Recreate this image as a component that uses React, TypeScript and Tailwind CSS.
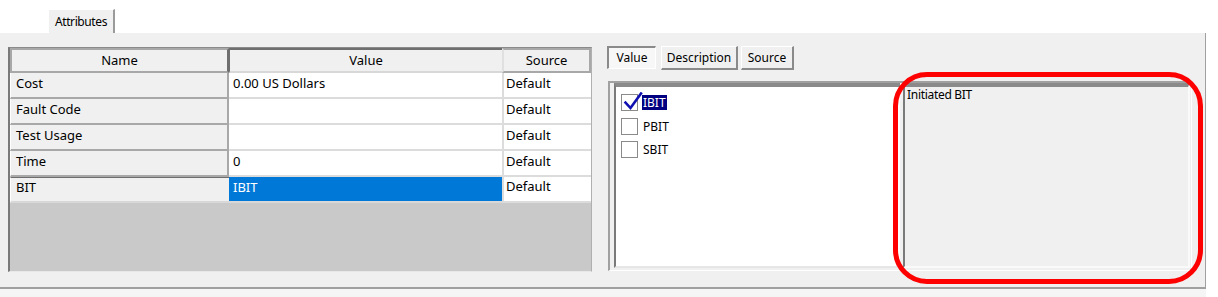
import React from "react";

const rows = [
  { name: "Cost", value: "0.00 US Dollars", source: "Default" },
  { name: "Fault Code", value: "", source: "Default" },
  { name: "Test Usage", value: "", source: "Default" },
  { name: "Time", value: "0", source: "Default" },
];

function Check() {
  return (
    <svg width="22" height="22" viewBox="0 0 22 22" className="absolute left-[1px] top-[-3px]">
      <path d="M2.5 10.5 L7.5 16 L18 1.5" fill="none" stroke="#1010b0" strokeWidth="2.6" strokeLinecap="square" strokeLinejoin="miter" />
    </svg>
  );
}

function Item({ label, checked, selected }: { label: string; checked?: boolean; selected?: boolean }) {
  return (
    <div className="flex items-center h-[23.5px]">
      <div className="relative w-[17px] h-[17px] border border-[#8a8a8a] bg-white flex-none">
        {checked && <Check />}
      </div>
      <div className="ml-[4px] flex items-center">
        <span
          className={
            selected
              ? "bg-[#000080] text-white text-[12px] leading-[15px] px-[1px]"
              : "text-black text-[12px] leading-[15px] px-[1px]"
          }
        >
          {label}
        </span>
      </div>
    </div>
  );
}

export default function App() {
  return (
    <div className="relative w-[1218px] h-[297px] bg-white font-['Noto_Sans',sans-serif] text-black overflow-hidden">
      {/* tab strip */}
      <div className="h-[33px] flex items-end pl-[48px]">
        <div className="w-[67px] h-[24px] bg-[#f0f0f0] border-l border-t border-white border-r-2 border-r-[#9a9a9a] flex items-center justify-center text-[12px] tracking-[-0.4px] text-black">
          Attributes
        </div>
      </div>

      {/* main panel */}
      <div className="w-[1206px] h-[254px] bg-[#f0f0f0] border-r border-r-[#a0a0a0] flex">
        {/* property grid */}
        <div className="ml-[8px] mt-[14px] w-[584px] h-[225px] border-l-2 border-t border-l-[#7a7a7a] border-t-[#8a8a8a] border-r border-b border-r-[#b0b0b0] border-b-[#e8e8e8] bg-[#c9c9c9] flex flex-col">
          {/* header */}
          <div className="flex h-[25px] flex-none bg-[#f0f0f0]">
            <div className="w-[219px] border-2 border-[#a8a8a8] border-r-[#6e6e6e] flex items-center justify-center text-[13px]">Name</div>
            <div className="w-[273px] border-t-2 border-l border-t-[#6e6e6e] border-l-[#6e6e6e] border-b-2 border-b-[#d8d8d8] flex items-center justify-center text-[13px]">Value</div>
            <div className="flex-1 border-2 border-[#a8a8a8] border-l-[#e0e0e0] flex items-center justify-center text-[13px]">Source</div>
          </div>
          {rows.map((r) => (
            <div key={r.name} className="flex h-[26px] flex-none">
              <div className="w-[219px] bg-[#f0f0f0] border-b-2 border-r-2 border-[#a8a8a8] border-l border-l-white pl-[5px] text-[13px] leading-[18px] pt-[1px]">{r.name}</div>
              <div className="w-[273px] bg-white border-b-2 border-b-[#dcdcdc] pl-[4px] text-[13px] leading-[18px] pt-[1px]">{r.value}</div>
              <div className="flex-1 bg-white border-b-2 border-b-[#dcdcdc] border-l-2 border-l-[#dcdcdc] pl-[2px] text-[13px] leading-[18px] pt-[1px]">{r.source}</div>
            </div>
          ))}
          <div className="flex h-[26px] flex-none">
            <div className="w-[219px] bg-[#f0f0f0] border-t border-t-[#6e6e6e] border-l border-l-white border-b-2 border-b-[#d8d8d8] pl-[5px] text-[13px] leading-[18px]">BIT</div>
            <div className="w-[273px] bg-[#0078d7] text-white border-b-2 border-b-[#d8d8d8] pl-[4px] text-[13px] leading-[18px] pt-[1px]">IBIT</div>
            <div className="flex-1 bg-white border-b-2 border-b-[#dcdcdc] border-l-2 border-l-[#dcdcdc] pl-[2px] text-[13px] leading-[18px]">Default</div>
          </div>
          <div className="flex-1" />
        </div>

        {/* right pane */}
        <div className="ml-[15px] flex flex-col">
          <div className="flex items-start mt-[12px] h-[26px]">
            <div className="mt-[1px] w-[49px] h-[23px] bg-[#f7f7f7] border-l-2 border-t-2 border-[#8a8a8a] border-r border-b border-r-white border-b-white flex items-center justify-center text-[12px] text-black">
              Value
            </div>
            <div className="ml-[5px] mt-[1px] w-[77px] h-[24px] bg-[#f0f0f0] border-l border-t border-white border-r-2 border-b-2 border-r-[#8a8a8a] border-b-[#8a8a8a] flex items-center justify-center text-[12px] text-black">
              Description
            </div>
            <div className="ml-[3px] mt-[1px] w-[53px] h-[24px] bg-[#f0f0f0] border-l border-t border-white border-r-2 border-b-2 border-r-[#8a8a8a] border-b-[#8a8a8a] flex items-center justify-center text-[12px] text-black">
              Source
            </div>
          </div>
          <div className="mt-[10px] ml-[1px] w-[584px] h-[190px] border-l-2 border-t-2 border-l-[#a0a0a0] border-t-[#a0a0a0] border-r border-b border-r-white border-b-white flex pl-[4px] pt-0 pb-[2px] pr-[1px]">
            <div className="w-[286px] h-full bg-white border-l-2 border-t-[4px] border-l-[#7a7a7a] border-t-[#8a8a8a] border-b-2 border-b-[#e6e6e6] pl-[5px] pt-[4px]">
              <Item label="IBIT" checked selected />
              <Item label="PBIT" />
              <Item label="SBIT" />
            </div>
            <div className="ml-[3px] flex-1 h-full bg-[#f0f0f0] border-l-2 border-t-[4px] border-l-[#7a7a7a] border-t-[#8a8a8a] border-r-2 border-b-2 border-r-[#fafafa] border-b-[#fafafa] pl-[2px] text-[12px] leading-[16px] tracking-[-0.3px] text-black">
              Initiated BIT
            </div>
          </div>
        </div>
      </div>

      {/* bottom strip */}
      <div className="h-[10px] w-[1206px] bg-[#f5f5f5] border-t-2 border-t-[#a0a0a0]" />

      {/* red annotation */}
      <div className="absolute left-[893px] top-[72px] w-[310px] h-[212px] border-[5px] border-[#ff0000] rounded-[34px] pointer-events-none" />
    </div>
  );
}
